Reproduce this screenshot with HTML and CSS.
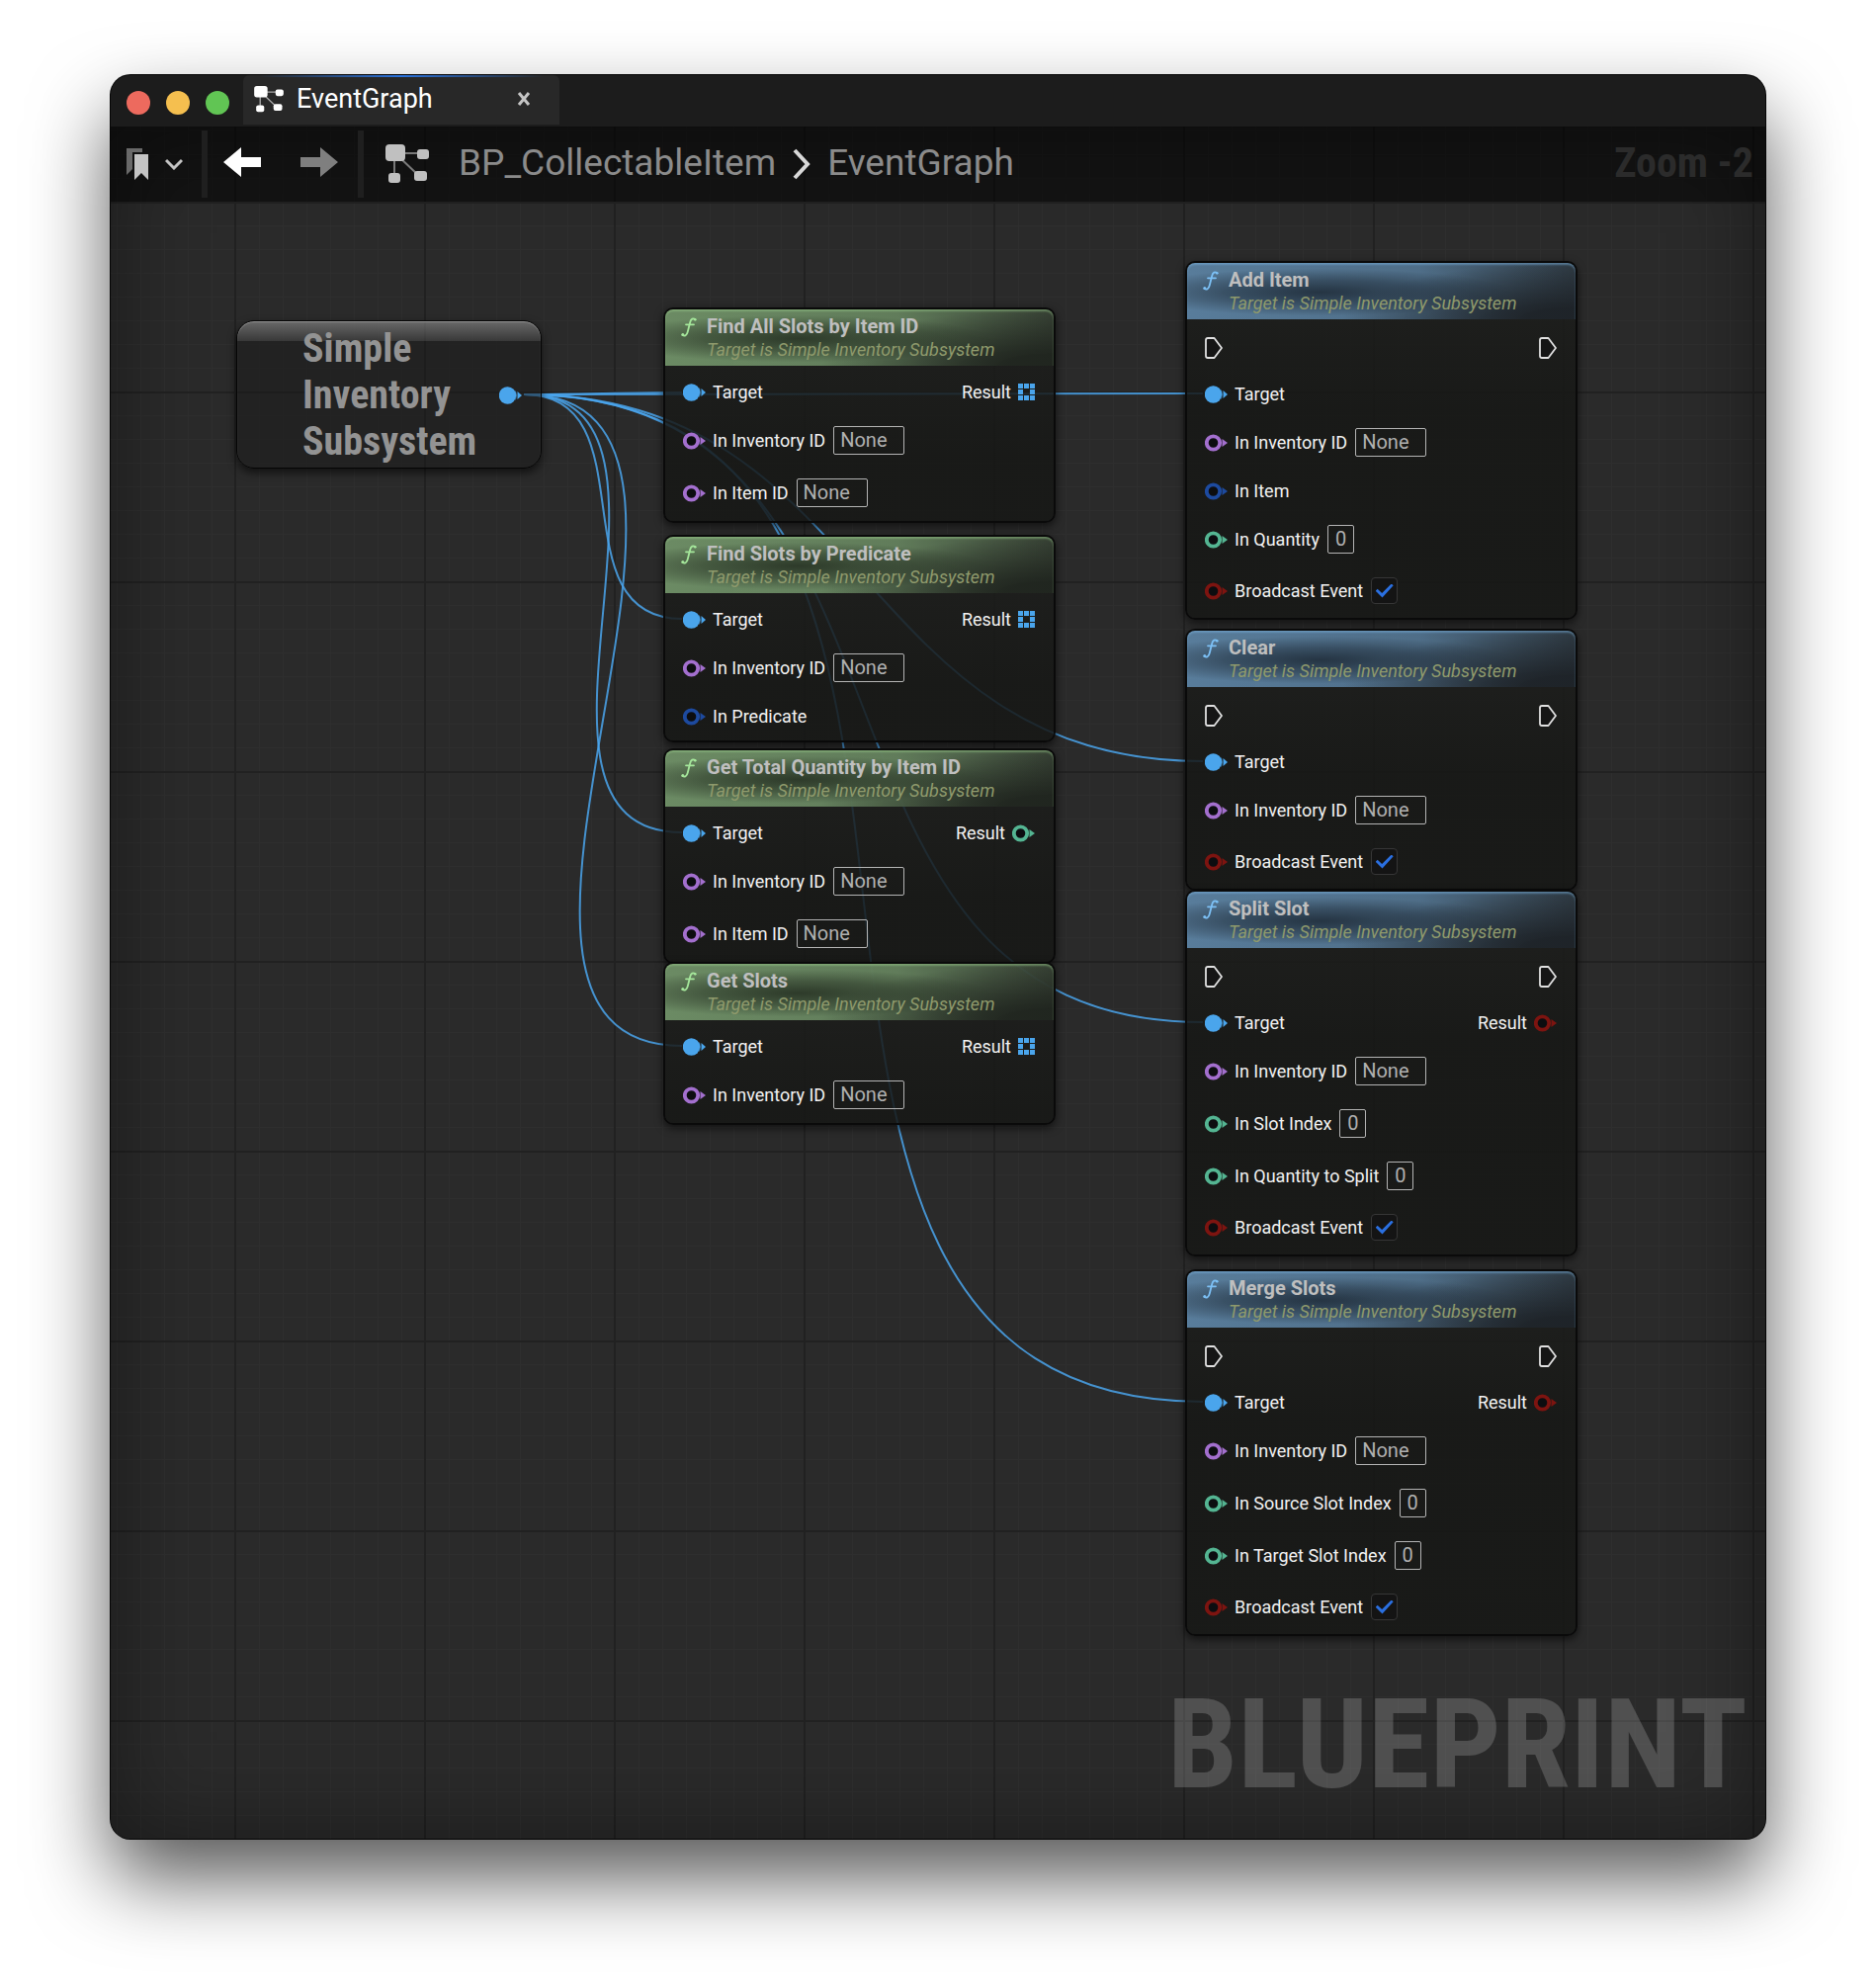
FILE: index.html
```html
<!DOCTYPE html>
<html lang="en">
<head>
<meta charset="utf-8">
<meta name="viewport" content="width=device-width, initial-scale=1">
<title>EventGraph</title>
<link rel="stylesheet" href="styles.css">
</head>
<body>
<svg class="sprite" aria-hidden="true">
  <symbol id="graph" viewBox="0 0 44 40">
    <path d="M10 9H36M9 10V34M13 12L34 32" fill="none" stroke="currentColor" stroke-width="2" opacity=".6"/>
    <rect x="0" y="0" width="20" height="17" rx="4"/><rect x="32" y="5" width="12" height="10" rx="3"/>
    <rect x="3" y="29" width="12" height="10" rx="3"/><rect x="29" y="27" width="13" height="10" rx="3"/>
  </symbol>
  <symbol id="func" viewBox="0 0 16 20">
    <path d="M14.500 2.300C12.200 0.200 10 1.600 9.200 5L6.800 14.500C6 18 3.600 19.600 1.500 17.800M5 7.300H13" fill="none" stroke="currentColor" stroke-width="1.800" stroke-linecap="round"/>
    <circle cx="1.800" cy="17.600" r="1.500"/><circle cx="14.200" cy="2.300" r="1.300"/>
  </symbol>
  <symbol id="pin" viewBox="0 0 23 18">
    <circle cx="8.500" cy="9" r="6.700" fill="#0c0d10" stroke="currentColor" stroke-width="3.800"/>
    <path d="M17.500 5L23 9L17.500 13Z"/>
  </symbol>
  <symbol id="pin-on" viewBox="0 0 23 18">
    <circle cx="8.500" cy="9" r="8.700"/><path d="M18.500 5L23 9L18.500 13Z"/>
    <path d="M16.500 4.500Q18.500 9 16.500 13.500" fill="none" stroke="currentColor" stroke-width="1" opacity=".6"/>
  </symbol>
  <symbol id="array" viewBox="0 0 17 17">
    <path d="M0 0h5v5H0zM6 0h5v5H6zM12 0h5v5h-5zM0 6h5v5H0zM12 6h5v5h-5zM0 12h5v5H0zM6 12h5v5H6zM12 12h5v5h-5z"/>
  </symbol>
  <symbol id="exec" viewBox="0 0 18 22">
    <path d="M1 3Q1 1 3 1H9.500L17 11L9.500 21H3Q1 21 1 19Z" fill="#151515" stroke="currentColor" stroke-width="1.800" stroke-linejoin="round"/>
  </symbol>
</svg>

<main class="window">
  <header class="titlebar">
    <div class="lights">
      <button class="light close" aria-label="Close"></button>
      <button class="light minimise" aria-label="Minimise"></button>
      <button class="light maximise" aria-label="Maximise"></button>
    </div>
    <div class="tab">
      <svg class="tab-icon"><use href="#graph"/></svg>
      <span class="tab-name">EventGraph</span>
      <button class="tab-close" aria-label="Close tab"><svg viewBox="0 0 14 14"><path d="M2 1L12 13M12 1L2 13"/></svg></button>
    </div>
  </header>

  <section class="graph">
    <nav class="toolbar">
      <button class="tool bookmarks" aria-label="Bookmarks">
        <svg class="bookmark-icon" viewBox="0 0 22 32"><path d="M0 0H16V4H6V21L0 27Z" opacity=".5"/><path d="M8 6H22V32L15 25L8 32Z"/></svg>
        <svg class="caret-icon" viewBox="0 0 18 12"><path d="M1 2L9 10L17 2"/></svg>
      </button>
      <span class="divider"></span>
      <button class="tool arrow back" aria-label="Back"><svg viewBox="0 0 38 30"><path d="M0 15L18 0V10H38V20H18V30Z"/></svg></button>
      <button class="tool arrow forward" aria-label="Forward"><svg viewBox="0 0 38 30"><path d="M38 15L20 0V10H0V20H20V30Z"/></svg></button>
      <span class="divider"></span>
      <svg class="crumb-icon"><use href="#graph"/></svg>
      <a class="crumb" href="#">BP_CollectableItem</a>
      <svg class="crumb-sep" viewBox="0 0 20 32"><path d="M3 2L16 16L3 30"/></svg>
      <a class="crumb" href="#">EventGraph</a>
      <span class="zoom">Zoom -2</span>
    </nav>

    <div class="watermark">BLUEPRINT</div>

    <svg class="wires" aria-hidden="true">
      <path d="M418 271C472 271 524 269 578 269"/>
      <path d="M418 271C547 271 449 498 578 498"/>
      <path d="M418 271C619 271 377 714 578 714"/>
      <path d="M418 271C691 271 305 930 578 930"/>
      <path d="M418 271C647 271 876 270 1105 270"/>
      <path d="M418 271C771 271 752 642 1105 642"/>
      <path d="M418 271C859 271 664 906 1105 906"/>
      <path d="M418 271C987 271 536 1290 1105 1290"/>
    </svg>

    <article class="variable" style="left:127px;top:196px">
      <h2>Simple Inventory Subsystem</h2>
      <svg class="pin object"><use href="#pin-on"/></svg>
    </article>

    <article class="node pure" style="left:559px;top:183px">
      <header><svg class="func"><use href="#func"/></svg><h2>Find All Slots by Item ID</h2><p>Target is Simple Inventory Subsystem</p></header>
      <div class="pins">
        <div class="row"><svg class="pin object"><use href="#pin-on"/></svg><span>Target</span><span class="out">Result</span><svg class="array object"><use href="#array"/></svg></div>
        <div class="row field"><svg class="pin name"><use href="#pin"/></svg><label for="fa-inv">In Inventory ID</label><input id="fa-inv" class="text" value="None"></div>
        <div class="row field"><svg class="pin name"><use href="#pin"/></svg><label for="fa-item">In Item ID</label><input id="fa-item" class="text" value="None"></div>
      </div>
    </article>

    <article class="node pure" style="left:559px;top:413px">
      <header><svg class="func"><use href="#func"/></svg><h2>Find Slots by Predicate</h2><p>Target is Simple Inventory Subsystem</p></header>
      <div class="pins">
        <div class="row"><svg class="pin object"><use href="#pin-on"/></svg><span>Target</span><span class="out">Result</span><svg class="array object"><use href="#array"/></svg></div>
        <div class="row field"><svg class="pin name"><use href="#pin"/></svg><label for="fp-inv">In Inventory ID</label><input id="fp-inv" class="text" value="None"></div>
        <div class="row"><svg class="pin struct"><use href="#pin"/></svg><span>In Predicate</span></div>
      </div>
    </article>

    <article class="node pure" style="left:559px;top:629px">
      <header><svg class="func"><use href="#func"/></svg><h2>Get Total Quantity by Item ID</h2><p>Target is Simple Inventory Subsystem</p></header>
      <div class="pins">
        <div class="row"><svg class="pin object"><use href="#pin-on"/></svg><span>Target</span><span class="out">Result</span><svg class="pin integer"><use href="#pin"/></svg></div>
        <div class="row field"><svg class="pin name"><use href="#pin"/></svg><label for="gt-inv">In Inventory ID</label><input id="gt-inv" class="text" value="None"></div>
        <div class="row field"><svg class="pin name"><use href="#pin"/></svg><label for="gt-item">In Item ID</label><input id="gt-item" class="text" value="None"></div>
      </div>
    </article>

    <article class="node pure" style="left:559px;top:845px">
      <header><svg class="func"><use href="#func"/></svg><h2>Get Slots</h2><p>Target is Simple Inventory Subsystem</p></header>
      <div class="pins">
        <div class="row"><svg class="pin object"><use href="#pin-on"/></svg><span>Target</span><span class="out">Result</span><svg class="array object"><use href="#array"/></svg></div>
        <div class="row field"><svg class="pin name"><use href="#pin"/></svg><label for="gs-inv">In Inventory ID</label><input id="gs-inv" class="text" value="None"></div>
      </div>
    </article>

    <article class="node call" style="left:1087px;top:136px">
      <header><svg class="func"><use href="#func"/></svg><h2>Add Item</h2><p>Target is Simple Inventory Subsystem</p></header>
      <div class="pins">
        <div class="row flow"><svg class="exec"><use href="#exec"/></svg><svg class="exec out"><use href="#exec"/></svg></div>
        <div class="row"><svg class="pin object"><use href="#pin-on"/></svg><span>Target</span></div>
        <div class="row field"><svg class="pin name"><use href="#pin"/></svg><label for="ai-inv">In Inventory ID</label><input id="ai-inv" class="text" value="None"></div>
        <div class="row"><svg class="pin struct"><use href="#pin"/></svg><span>In Item</span></div>
        <div class="row field"><svg class="pin integer"><use href="#pin"/></svg><label for="ai-qty">In Quantity</label><input id="ai-qty" class="number" value="0"></div>
        <div class="row check"><svg class="pin bool"><use href="#pin"/></svg><label for="ai-evt">Broadcast Event</label><input id="ai-evt" type="checkbox" checked></div>
      </div>
    </article>

    <article class="node call" style="left:1087px;top:508px">
      <header><svg class="func"><use href="#func"/></svg><h2>Clear</h2><p>Target is Simple Inventory Subsystem</p></header>
      <div class="pins">
        <div class="row flow"><svg class="exec"><use href="#exec"/></svg><svg class="exec out"><use href="#exec"/></svg></div>
        <div class="row"><svg class="pin object"><use href="#pin-on"/></svg><span>Target</span></div>
        <div class="row field"><svg class="pin name"><use href="#pin"/></svg><label for="cl-inv">In Inventory ID</label><input id="cl-inv" class="text" value="None"></div>
        <div class="row check"><svg class="pin bool"><use href="#pin"/></svg><label for="cl-evt">Broadcast Event</label><input id="cl-evt" type="checkbox" checked></div>
      </div>
    </article>

    <article class="node call" style="left:1087px;top:772px">
      <header><svg class="func"><use href="#func"/></svg><h2>Split Slot</h2><p>Target is Simple Inventory Subsystem</p></header>
      <div class="pins">
        <div class="row flow"><svg class="exec"><use href="#exec"/></svg><svg class="exec out"><use href="#exec"/></svg></div>
        <div class="row"><svg class="pin object"><use href="#pin-on"/></svg><span>Target</span><span class="out">Result</span><svg class="pin bool"><use href="#pin"/></svg></div>
        <div class="row field"><svg class="pin name"><use href="#pin"/></svg><label for="ss-inv">In Inventory ID</label><input id="ss-inv" class="text" value="None"></div>
        <div class="row field"><svg class="pin integer"><use href="#pin"/></svg><label for="ss-idx">In Slot Index</label><input id="ss-idx" class="number" value="0"></div>
        <div class="row field"><svg class="pin integer"><use href="#pin"/></svg><label for="ss-qty">In Quantity to Split</label><input id="ss-qty" class="number" value="0"></div>
        <div class="row check"><svg class="pin bool"><use href="#pin"/></svg><label for="ss-evt">Broadcast Event</label><input id="ss-evt" type="checkbox" checked></div>
      </div>
    </article>

    <article class="node call" style="left:1087px;top:1156px">
      <header><svg class="func"><use href="#func"/></svg><h2>Merge Slots</h2><p>Target is Simple Inventory Subsystem</p></header>
      <div class="pins">
        <div class="row flow"><svg class="exec"><use href="#exec"/></svg><svg class="exec out"><use href="#exec"/></svg></div>
        <div class="row"><svg class="pin object"><use href="#pin-on"/></svg><span>Target</span><span class="out">Result</span><svg class="pin bool"><use href="#pin"/></svg></div>
        <div class="row field"><svg class="pin name"><use href="#pin"/></svg><label for="ms-inv">In Inventory ID</label><input id="ms-inv" class="text" value="None"></div>
        <div class="row field"><svg class="pin integer"><use href="#pin"/></svg><label for="ms-src">In Source Slot Index</label><input id="ms-src" class="number" value="0"></div>
        <div class="row field"><svg class="pin integer"><use href="#pin"/></svg><label for="ms-tgt">In Target Slot Index</label><input id="ms-tgt" class="number" value="0"></div>
        <div class="row check"><svg class="pin bool"><use href="#pin"/></svg><label for="ms-evt">Broadcast Event</label><input id="ms-evt" type="checkbox" checked></div>
      </div>
    </article>
  </section>
</main>
</body>
</html>
```
FILE: styles.css
```css
* { box-sizing: border-box; }
body {
  margin: 0;
  min-height: 100vh;
  padding: 76px 112px 148px;
  display: flex;
  background: #fff;
  font-family: Roboto, "Liberation Sans", sans-serif;
}
button { border: 0; padding: 0; background: none; color: inherit; font: inherit; }
h2, p { margin: 0; }
svg { display: block; flex: none; fill: currentColor; }
.sprite { position: absolute; width: 0; height: 0; }

.window {
  flex: 1;
  display: flex;
  flex-direction: column;
  overflow: hidden;
  border-radius: 20px;
  background: #1c1c1c;
  box-shadow: 0 0 0 1px #050505, 0 40px 80px rgba(0, 0, 0, .66);
}

/* Title bar */
.titlebar { display: flex; height: 52px; gap: 14px; padding-left: 16px; }
.lights { display: flex; align-items: center; gap: 16px; padding-top: 4px; }
.light { width: 24px; height: 24px; border-radius: 50%; }
.close { background: #ed6a5e; }
.minimise { background: #f5bf4f; }
.maximise { background: #61c554; }
.tab {
  position: relative;
  display: flex;
  align-items: center;
  width: 320px;
  height: 50px;
  padding: 0 29px 2px 11px;
  gap: 13px;
  border-radius: 6px 6px 0 0;
  background: #282828;
  color: #fff;
}
.tab::before {
  content: "";
  position: absolute;
  inset: 0 16px auto;
  height: 2px;
  background: linear-gradient(90deg, transparent, #2a72dc 50%, transparent);
}
.tab-icon { width: 30px; height: 27px; }
.tab-name { font-size: 27px; line-height: 32px; }
.tab-close { margin-left: auto; color: #c4c4c4; }
.tab-close svg { width: 14px; height: 14px; fill: none; stroke: currentColor; stroke-width: 3; }

/* Graph canvas */
.graph {
  position: relative;
  flex: 1;
  min-height: 1560px;
  background:
    linear-gradient(90deg, #212121 2px, transparent 2px) 125px 0 / 192px 100%,
    linear-gradient(#212121 2px, transparent 2px) 0 76px / 100% 192px,
    linear-gradient(90deg, #2e2e2e 1px, transparent 1px) 6px 0 / 24px 100%,
    linear-gradient(#2e2e2e 1px, transparent 1px) 0 4px / 100% 24px,
    #2a2a2a;
}
.graph::before {
  content: "";
  position: absolute;
  inset: 0;
  box-shadow: inset 0 0 90px rgba(0, 0, 0, .4);
}
.toolbar {
  position: relative;
  display: flex;
  align-items: center;
  height: 76px;
  padding: 0 12px 0 16px;
  background: rgba(0, 0, 0, .55);
  color: #8b8b8b;
}
.bookmarks { display: flex; align-items: center; gap: 17px; color: #c4c4c4; }
.bookmark-icon { width: 22px; height: 32px; }
.caret-icon { width: 18px; height: 12px; fill: none; stroke: currentColor; stroke-width: 3; }
.divider { width: 6px; height: 68px; background: #1f1f1f; }
.bookmarks + .divider { margin: 0 16px 0 19px; }
.arrow { padding-bottom: 4px; }
.arrow svg { width: 38px; height: 30px; }
.back { color: #fff; margin-right: 40px; }
.forward { color: #7f7f7f; margin-right: 20px; }
.crumb-icon { width: 44px; height: 40px; margin: 0 30px 0 22px; color: #c0c0c0; }
.crumb { padding-bottom: 2px; font-size: 37px; line-height: 42px; color: inherit; text-decoration: none; }
.crumb-sep { width: 20px; height: 32px; margin: 0 16px; fill: none; stroke: #d8d8d8; stroke-width: 4; }
.zoom, .watermark, .variable h2 { font-family: "Roboto Condensed", "Liberation Sans Narrow", Roboto, sans-serif; font-weight: 700; }
.zoom { margin-left: auto; padding-bottom: 2px; font-size: 42px; line-height: 48px; color: #2b2b2b; }
.watermark {
  position: absolute;
  right: 18px;
  bottom: 20px;
  font-size: 127px;
  line-height: 150px;
  color: rgba(255, 255, 255, .18);
}
.wires {
  position: absolute;
  inset: 0;
  width: 100%;
  height: 100%;
  fill: none;
  stroke: rgba(74, 165, 236, .85);
  stroke-width: 2;
}

/* Pins */
.pin { width: 23px; height: 18px; }
.array { width: 17px; height: 17px; }
.exec { width: 18px; height: 22px; color: #e0e0e0; }
.object { color: #4aa5ec; }
.name { color: #a36fce; }
.struct { color: #1d4a9f; }
.integer { color: #54b592; }
.bool { color: #7d1410; }

/* Variable node */
.variable {
  position: absolute;
  display: flex;
  align-items: center;
  justify-content: space-between;
  width: 309px;
  height: 150px;
  padding: 1px 19px 0 66px;
  border: 1px solid #050505;
  border-radius: 18px;
  background:
    linear-gradient(rgba(255, 255, 255, .32), rgba(255, 255, 255, .1) 20px, transparent 20px),
    rgba(28, 28, 28, .55);
  box-shadow: inset 0 1px 1px rgba(255, 255, 255, .3), 0 4px 8px rgba(0, 0, 0, .6);
}
.variable h2 { width: 180px; font-size: 40px; line-height: 47px; color: #939393; }

/* Function nodes */
.node {
  position: absolute;
  width: 397px;
  border: 2px solid #0a0a0a;
  border-radius: 10px;
  background: linear-gradient(rgba(30, 31, 29, .86), rgba(22, 23, 21, .86) 150px);
  background-clip: padding-box;
  box-shadow: 0 3px 8px rgba(0, 0, 0, .6);
}
.node header {
  display: grid;
  grid-template-columns: 15px 1fr;
  grid-auto-rows: 24px;
  column-gap: 11px;
  height: 57px;
  padding: 5px 16px 0;
  border-radius: 8px 8px 0 0;
}
.pure header {
  color: #a5e79b;
  background:
    radial-gradient(ellipse 50% 42% at 34% 52%, rgba(36, 46, 33, .85), rgba(36, 46, 33, .5) 50%, transparent),
    radial-gradient(ellipse 60% 100% at 100% 100%, rgba(32, 37, 31, .95) 20%, transparent),
    linear-gradient(90deg, rgba(112, 145, 104, .95), rgba(104, 134, 97, .9) 60%, rgba(70, 86, 67, .6));
  box-shadow: inset 0 2px 2px rgba(150, 200, 135, .5);
}
.call header {
  color: #7cc0f5;
  background:
    radial-gradient(ellipse 50% 42% at 34% 52%, rgba(30, 42, 54, .85), rgba(30, 42, 54, .5) 50%, transparent),
    radial-gradient(ellipse 60% 100% at 100% 100%, rgba(30, 35, 40, .95) 20%, transparent),
    linear-gradient(90deg, rgba(92, 130, 162, .95), rgba(84, 118, 147, .9) 60%, rgba(58, 76, 92, .6));
  box-shadow: inset 0 2px 2px rgba(120, 175, 220, .5);
}
.func { width: 16px; height: 20px; margin-top: 3px; }
.node h2 { font-size: 20px; line-height: 24px; font-weight: 700; color: #bfbfbf; white-space: nowrap; }
.node p { grid-column: 2; font-size: 18px; line-height: 24px; font-style: italic; color: #8f9a6c; white-space: nowrap; }
.pins { display: grid; gap: 24px; padding: 16px 19px 14px 18px; }
.row { display: flex; align-items: center; gap: 7px; height: 21px; font-size: 18px; line-height: 21px; color: #f2f2f2; }
.field { height: 29px; }
.check { height: 27px; }
.flow { height: 25px; }
.out { margin-left: auto; }
.text, .number {
  height: 29px;
  border: 1px solid #b4b4b4;
  border-radius: 2px;
  background: none;
  color: #b0b0b0;
  font: 20px/24px Roboto, "Liberation Sans", sans-serif;
}
.text { width: 72px; padding: 0 0 2px 6px; }
.number { width: 27px; padding: 0 0 2px; text-align: center; }
label + input { margin: 0 0 0 1px; }
input[type="checkbox"] {
  appearance: none;
  display: grid;
  place-items: center;
  width: 27px;
  height: 27px;
  border: 1px solid #363636;
  border-radius: 4px;
  background: #141414;
}
input[type="checkbox"]:checked::before {
  content: "";
  width: 18px;
  height: 14px;
  background: #2a6fe0;
  clip-path: polygon(0 52%, 11% 38%, 36% 68%, 89% 0, 100% 12%, 38% 100%);
}
```
